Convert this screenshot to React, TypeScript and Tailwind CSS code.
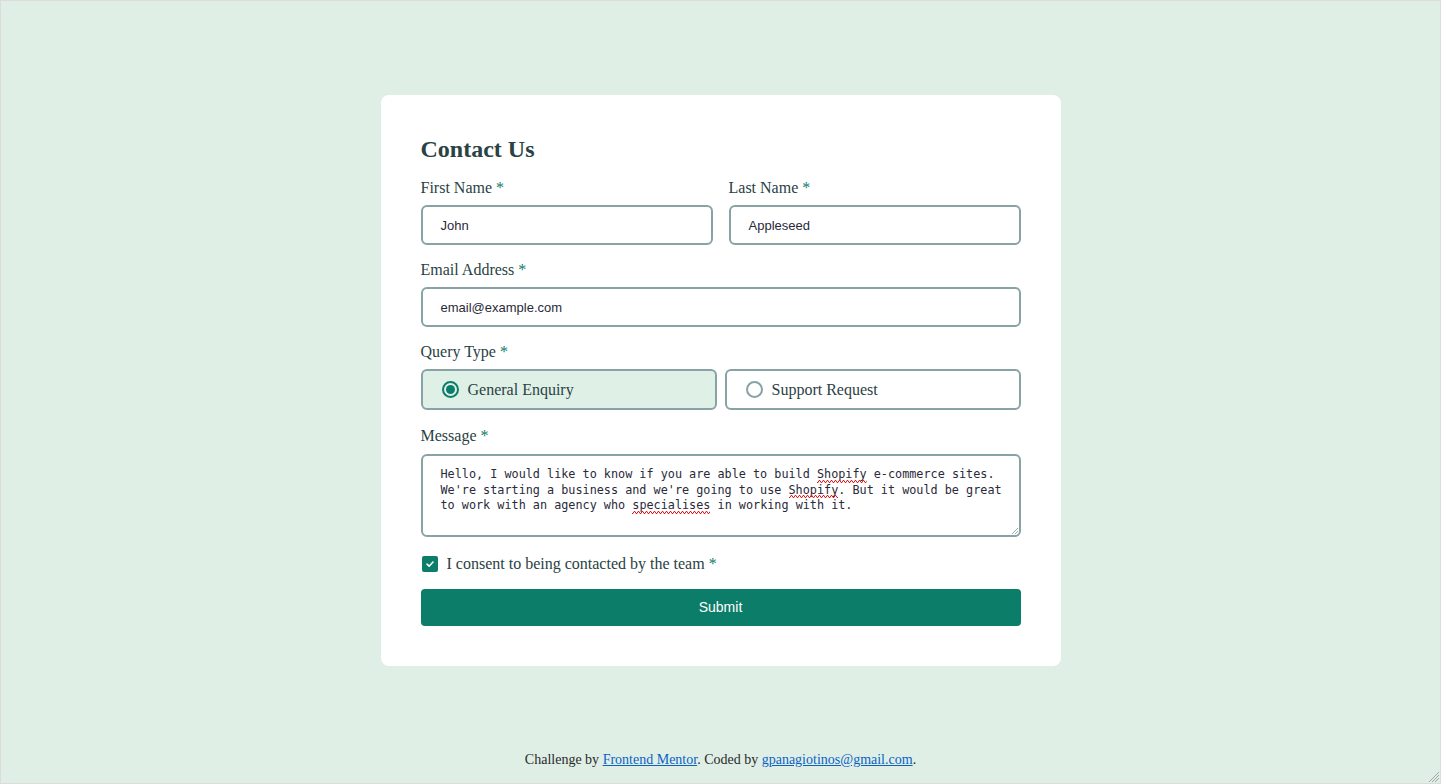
import React from "react";

const serif = "font-['Liberation_Serif','Times_New_Roman',serif]";
const sans = "font-['Liberation_Sans',Arial,sans-serif]";

function Label({ children, htmlFor }: { children: React.ReactNode; htmlFor?: string }) {
  return (
    <label htmlFor={htmlFor} className={`${serif} block text-[16px] leading-[18px] text-[#2a4244]`}>
      {children} <span className="text-[#0c7d69]">*</span>
    </label>
  );
}

function Radio({ checked, label }: { checked: boolean; label: string }) {
  return (
    <div
      className={`flex h-[41px] flex-1 items-center gap-[9px] rounded-[6px] border-2 border-[#87a3a6] pl-[19px] ${
        checked ? "bg-[#dff1e7]" : "bg-white"
      }`}
    >
      <span
        className={`flex h-[17px] w-[17px] items-center justify-center rounded-full border-2 ${
          checked ? "border-[#0c7d69]" : "border-[#87a3a6]"
        }`}
      >
        {checked && <span className="h-[9px] w-[9px] rounded-full bg-[#0c7d69]" />}
      </span>
      <span className={`${serif} text-[16px] leading-[18px] text-[#2a4244]`}>{label}</span>
    </div>
  );
}

const Squig = ({ children }: { children: React.ReactNode }) => (
  <span className="relative inline-block">
    {children}
    <svg className="pointer-events-none absolute bottom-0 left-0 h-[3px] w-full" preserveAspectRatio="none">
      <defs>
        <pattern id="wave" width="4" height="3" patternUnits="userSpaceOnUse">
          <path d="M0 2.5 L1 2.5 L2 0.5 L3 0.5 L4 2.5" stroke="#e01b1b" strokeWidth="1" fill="none" />
        </pattern>
      </defs>
      <rect width="100%" height="3" fill="url(#wave)" />
    </svg>
  </span>
);

const inputCls = `${sans} flex h-[40px] items-center rounded-[6px] border-2 border-[#87a3a6] pl-[18px] pt-px text-[13px] text-[#2a2a3a]`;

export default function App() {
  return (
    <div className="relative flex h-[784px] w-full flex-col items-center border border-[#dcdcdc] bg-[#dfefe6] pt-[94px]">
      <div className="w-[680px] rounded-lg bg-white p-10">
        <h1 className={`${serif} text-[24px] font-bold leading-[28px] text-[#2a4244]`}>Contact Us</h1>

        <div className="mt-4 flex gap-4">
          <div className="flex flex-1 flex-col gap-2">
            <Label>First Name</Label>
            <div className={inputCls}>John</div>
          </div>
          <div className="flex flex-1 flex-col gap-2">
            <Label>Last Name</Label>
            <div className={inputCls}>Appleseed</div>
          </div>
        </div>

        <div className="mt-4 flex flex-col gap-2">
          <Label>Email Address</Label>
          <div className={inputCls}>email@example.com</div>
        </div>

        <div className="mt-4 flex flex-col gap-2">
          <Label>Query Type</Label>
          <div className="flex gap-2">
            <Radio checked label="General Enquiry" />
            <Radio checked={false} label="Support Request" />
          </div>
        </div>

        <div className="mt-[17px] flex flex-col gap-[9px]">
          <Label>Message</Label>
          <div className="relative h-[83px] rounded-[6px] border-2 border-[#87a3a6] pl-[18px] pr-[10px] pt-[11px] font-['DejaVu_Sans_Mono',Consolas,monospace] text-[11.8px] leading-[15.5px] text-[#2a2a3a]">
            Hello, I would like to know if you are able to build <Squig>Shopify</Squig> e-commerce sites. We're starting a
            business and we're going to use <Squig>Shopify</Squig>. But it would be great to work with an agency who{" "}
            <Squig>specialises</Squig> in working with it.
            <svg className="absolute bottom-[1px] right-[1px]" width="7" height="7" viewBox="0 0 7 7">
              <line x1="1" y1="7" x2="7" y2="1" stroke="#9aa" strokeWidth="1" />
              <line x1="4" y1="7" x2="7" y2="4" stroke="#9aa" strokeWidth="1" />
            </svg>
          </div>
        </div>

        <div className="mt-[18px] flex items-center gap-[9px] pl-px">
          <span className="flex h-4 w-4 items-center justify-center rounded-[2px] bg-[#0c7d69]">
            <svg width="10" height="10" viewBox="0 0 10 10" fill="none">
              <path d="M2 5.2 L4.1 7.2 L8 3" stroke="white" strokeWidth="1.6" strokeLinecap="round" strokeLinejoin="round" />
            </svg>
          </span>
          <span className={`${serif} text-[16px] leading-[18px] text-[#2a4244]`}>
            I consent to being contacted by the team <span className="text-[#0c7d69]">*</span>
          </span>
        </div>

        <button
          className={`${sans} mt-4 flex h-[37px] w-full items-center justify-center rounded-[4px] bg-[#0c7d69] text-[14px] text-white`}
        >
          Submit
        </button>
      </div>

      <p className={`${serif} mt-auto mb-[15px] text-[14px] leading-[16px] text-[#2a2a2a]`}>
        Challenge by{" "}
        <a href="#" className="text-[#0b62c4] underline">
          Frontend Mentor
        </a>
        . Coded by{" "}
        <a href="#" className="text-[#0b62c4] underline">
          gpanagiotinos@gmail.com
        </a>
        .
      </p>

      <svg className="absolute bottom-[1px] right-[1px]" width="11" height="11" viewBox="0 0 11 11">
        <line x1="1" y1="11" x2="11" y2="1" stroke="#a0a8a4" strokeWidth="1" />
        <line x1="4" y1="11" x2="11" y2="4" stroke="#a0a8a4" strokeWidth="1" />
        <line x1="7" y1="11" x2="11" y2="7" stroke="#a0a8a4" strokeWidth="1" />
      </svg>
    </div>
  );
}
